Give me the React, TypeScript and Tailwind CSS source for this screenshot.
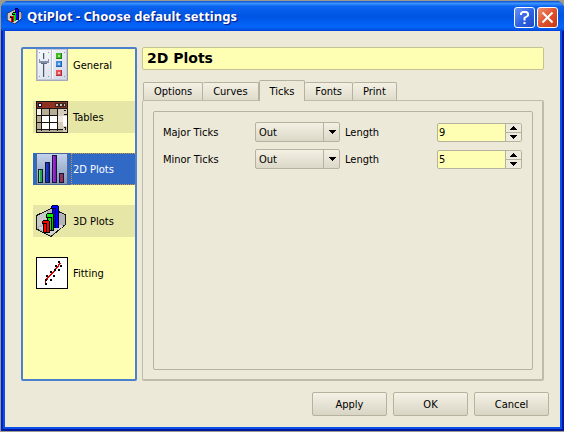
import { useState } from "react";
import type { ReactNode } from "react";

function GeneralIcon() {
  return (
    <svg width="32" height="32" viewBox="0 0 32 32" shapeRendering="crispEdges" aria-hidden="true">
      <defs>
        <linearGradient id="gen" x1="0" y1="0" x2="1" y2="1">
          <stop offset="0" stopColor="#f8fafc" />
          <stop offset="1" stopColor="#d2d8e6" />
        </linearGradient>
      </defs>
      <path fill="#8f94aa" d="M0 0h32v32H0z" />
      <path fill="#c3c8d8" d="M0 0h31v31H0z" />
      <path fill="#a5aabe" d="M0 0h1v31h31v1H0z" />
      <path fill="url(#gen)" d="M2 1h28v29H2z" />
      <path fill="#b9c0d2" d="M15 1h1v29h-1z" />
      <path fill="#fff" d="M16 1h1v29h-1z" />
      <path fill="#9097a8" d="M3 3h1v1H3zM12 3h1v1h-1zM3 27h1v1H3zM12 27h1v1h-1zM28 3h1v1h-1zM28 27h1v1h-1z" />
      <path fill="#4c566a" d="M7 4h1v24H7z" />
      <path fill="#c5ccd9" d="M8 4h1v24H8z" />
      <path fill="#8491a8" d="M3 10h10v4H3z" />
      <path fill="#e8edf5" d="M4 10h8v2H4z" />
      <path fill="#5c6c84" d="M5 14h6v1H5z" />
      <path fill="#247a16" d="M20 4h6v6h-6z" />
      <path fill="#42ba26" d="M20 4h5v5h-5z" />
      <path fill="#a0ee78" d="M22 6h2v2h-2z" />
      <path fill="#265faf" d="M20 12h6v6h-6z" />
      <path fill="#418be0" d="M20 12h5v5h-5z" />
      <path fill="#a9dcff" d="M22 14h2v2h-2z" />
      <path fill="#aa3040" d="M20 21h6v6h-6z" />
      <path fill="#e85058" d="M20 21h5v5h-5z" />
      <path fill="#ffc0b8" d="M22 23h2v2h-2z" />
    </svg>
  );
}

function TablesIcon() {
  return (
    <svg width="32" height="32" viewBox="0 0 32 32" shapeRendering="crispEdges" aria-hidden="true">
      <path fill="#181414" d="M0 0h32v32H0z" />
      <path fill="#d4ccbc" d="M1 1h30v30H1z" />
      <path fill="#912f20" d="M1 1h30v6H1z" />
      <path fill="#101030" d="M2 2h4v4H2z" />
      <path fill="#fff" d="M3 3h2v2H3z" />
      <path fill="#3b2520" d="M19 2h11v4H19z" />
      <path fill="#c9c0b0" d="M20 3h2v2h-2zM24 3h2v2h-2zM28 3h1v2h-1z" />
      <path fill="#1c1814" d="M0 7h32v1H0z" />
      <path fill="#b8ad96" d="M6 8h15v6H6zM1 15h5v6H1zM1 22h5v6H1z" />
      <path fill="#d4ccbc" d="M21 8h5v6h-5z" />
      <path fill="#f7f5ee" d="M1 8h4v6H1z" />
      <path fill="#fff" d="M6 15h15v13H6zM27 15h4v10h-4z" />
      <path fill="#ece8dc" d="M21 15h6v6h-6z" />
      <path fill="#171410" d="M5 8h1v22H5zM13 8h1v22h-1zM21 8h1v22h-1zM1 14h5v1H1zM6 14h16v1H6zM1 21h21v1H1zM1 28h26v1H1zM28 9h2v1h-2zM28 13h3v1h-3zM28 26h2v1h-2zM29 27h1v2h-1z" />
      <path fill="#b3aa98" d="M1 29h4v2H1zM6 29h7v2H6zM14 29h7v2h-7zM22 29h5v2h-5z" />
    </svg>
  );
}

function Plot2DIcon() {
  return (
    <svg width="32" height="32" viewBox="0 0 32 32" shapeRendering="crispEdges" aria-hidden="true">
      <defs>
        <linearGradient id="sky" x1="0" y1="0" x2="0" y2="1">
          <stop offset="0" stopColor="#c2d2ee" />
          <stop offset="1" stopColor="#8295b2" />
        </linearGradient>
        <linearGradient id="purple">
          <stop offset="0" stopColor="#b42ce4" />
          <stop offset="1" stopColor="#711aa0" />
        </linearGradient>
        <linearGradient id="blue">
          <stop offset="0" stopColor="#2040d8" />
          <stop offset="1" stopColor="#1020a0" />
        </linearGradient>
      </defs>
      <path fill="#4a6698" d="M0 0h32v32H0z" />
      <path fill="url(#sky)" d="M1 1h30v30H1z" />
      <path fill="#101838" d="M2 16h5v14H2zM9 9h5v21H9zM16 2h5v28h-5zM23 20h5v10h-5z" />
      <path fill="#24a854" d="M3 17h3v12H3z" />
      <path fill="#72dc82" d="M3 17h1v12H3z" />
      <path fill="url(#blue)" d="M10 10h3v19h-3z" />
      <path fill="url(#purple)" d="M17 3h3v26h-3z" />
      <path fill="#983058" d="M24 21h3v8h-3z" />
    </svg>
  );
}

function Plot3DIcon({ size = 32 }: { size?: number }) {
  return (
    <svg width={size} height={size} viewBox="0 0 32 32" shapeRendering="crispEdges" aria-hidden="true">
      <path fill="#b4b4b4" stroke="#181818" d="M.5 10.500L15 3.500l14.500 6v10L15 31.500.5 24z" />
      <path fill="#d4d4d4" d="M2 23l12-5 14 3-13 9z" />
      <path fill="#c8c8c8" d="M1 11l10-5v11l-10 5z" />
      <path fill="#000040" d="M15 1h1V0h6v1h1v22h-7V4h-1z" />
      <path fill="#0000ff" d="M16 1h6v2h-6zM17 4h2v18h-2zM20 3h2v20h-2z" />
      <path fill="#000" d="M10 9h1V8h6v1h1v17h-7V13h-1z" />
      <path fill="#00f000" d="M11 9h6v3h-6zM12 13h3v12h-3z" />
      <path fill="#00c000" d="M16 12h1v13h-1z" />
      <path fill="#000" d="M6 16h1v-1h6v1h1v12H7v-9H6z" />
      <path fill="#ff0000" d="M7 16h6v2H7zM8 19h2v8H8zM11 18h2v9h-2z" />
    </svg>
  );
}

function FittingIcon() {
  return (
    <svg width="32" height="32" viewBox="0 0 32 32" shapeRendering="crispEdges" aria-hidden="true">
      <path fill="#000" d="M0 0h32v32H0z" />
      <path fill="#fff" d="M1 1h30v30H1z" />
      <path fill="none" stroke="#e00000" strokeWidth="1.500" d="M9.500 27v-3l3-4 4-4 4-5 4-5" />
      <path
        fill="#000"
        d="M9 26h2v2H9zM9 22h2v2H9zM14 22h2v2h-2zM10 18h2v2h-2zM17 18h2v2h-2zM14 14h2v2h-2zM18 12h2v2h-2zM22 12h2v2h-2zM19 8h2v2h-2zM24 8h2v2h-2zM22 4h2v2h-2z"
      />
    </svg>
  );
}

const pages: { name: string; icon: ReactNode; striped: boolean }[] = [
  { name: "General", icon: <GeneralIcon />, striped: false },
  { name: "Tables", icon: <TablesIcon />, striped: true },
  { name: "2D Plots", icon: <Plot2DIcon />, striped: false },
  { name: "3D Plots", icon: <Plot3DIcon />, striped: true },
  { name: "Fitting", icon: <FittingIcon />, striped: false },
];

const tabs = ["Options", "Curves", "Ticks", "Fonts", "Print"];

function PageItem({
  page,
  selected,
  onSelect,
}: {
  page: (typeof pages)[number];
  selected: boolean;
  onSelect: () => void;
}) {
  const fill = selected ? "bg-[#316ac5] text-white" : page.striped ? "bg-[#e6e6a6]" : "";
  return (
    <li>
      <button type="button" onClick={onSelect} className={`flex h-8 w-full items-center pl-[3px] text-left ${fill}`}>
        {page.icon}
        <span
          className={`ml-[3px] flex h-8 flex-1 items-center border border-r-0 border-dotted pt-0.5 pl-px ${
            selected ? "border-[#ce953a]" : "border-transparent"
          }`}
        >
          {page.name}
        </span>
      </button>
    </li>
  );
}

function TickRow({ label, id, initial }: { label: string; id: string; initial: number }) {
  const [length, setLength] = useState(initial);
  return (
    <div className="flex h-5 items-center">
      <label htmlFor={`${id}-style`} className="w-[92px] pt-0.5">
        {label}
      </label>
      <div className="relative h-5 w-[85px]">
        <select
          id={`${id}-style`}
          defaultValue="Out"
          className="h-5 w-full appearance-none rounded-[2px] border border-[#b5b2a0] bg-linear-to-b from-[#f4f1e4] to-[#dbd8c8] pt-0.5 pl-[3px] outline-none"
        >
          <option>None</option>
          <option>Out</option>
          <option>In</option>
          <option>In &amp; Out</option>
        </select>
        <span className="pointer-events-none absolute inset-y-0 right-0 flex w-[17px] items-center justify-center border-l border-[#b5b2a0]">
          <svg width="7" height="4" shapeRendering="crispEdges" aria-hidden="true">
            <path d="M0 0h7v1H6v1H5v1H4v1H3V3H2V2H1V1H0z" />
          </svg>
        </span>
      </div>
      <label htmlFor={`${id}-length`} className="ml-[5px] w-[92px] pt-0.5">
        Length
      </label>
      <div className="flex h-[19px] w-[85px] rounded-[2px] border border-[#b5b2a0] bg-[#ffffb4]">
        <input
          id={`${id}-length`}
          type="text"
          inputMode="numeric"
          value={length}
          onChange={(e) => setLength(Number(e.target.value) || 0)}
          className="min-w-0 flex-1 pt-0.5 pl-px outline-none"
        />
        <div className="flex w-4 flex-col border-l border-[#b5b2a0] bg-[#eeebdc]">
          <button
            type="button"
            aria-label={`Increase ${label} length`}
            onClick={() => setLength(length + 1)}
            className="flex flex-1 items-center justify-center border-b border-[#b5b2a0]"
          >
            <svg width="7" height="4" shapeRendering="crispEdges" aria-hidden="true">
              <path d="M3 0h1v1h1v1h1v1h1v1H0V3h1V2h1V1h1z" />
            </svg>
          </button>
          <button
            type="button"
            aria-label={`Decrease ${label} length`}
            onClick={() => setLength(Math.max(0, length - 1))}
            className="flex flex-1 items-center justify-center"
          >
            <svg width="7" height="4" shapeRendering="crispEdges" aria-hidden="true">
              <path d="M0 0h7v1H6v1H5v1H4v1H3V3H2V2H1V1H0z" />
            </svg>
          </button>
        </div>
      </div>
    </div>
  );
}

export default function App() {
  const [page, setPage] = useState("2D Plots");
  const [tab, setTab] = useState("Ticks");

  return (
    <div className="flex h-screen flex-col bg-[#9d9a90] pt-px pb-px pl-px font-['DejaVu_Sans_Condensed','DejaVu_Sans',sans-serif] text-[11px] leading-4 text-black">
      <div className="flex flex-1 flex-col overflow-hidden rounded-t-lg bg-[#0831d9]">
        <header className="flex h-[30px] items-center bg-linear-[180deg,#0a4ed0_0%,#3c94ff_8%,#0a63ee_18%,#0054e3_50%,#0464fb_85%,#0458e6_94%,#003dd7_100%] px-[6px]">
          <Plot3DIcon size={16} />
          <h1 className="ml-1 flex-1 font-['Noto_Sans',sans-serif] text-[13px] font-bold text-white [text-shadow:1px_1px_1px_#0a1883]">
            QtiPlot - Choose default settings
          </h1>
          <div className="flex gap-[2px] pt-[2px]">
            <button
              type="button"
              aria-label="Help"
              className="flex size-[21px] items-center justify-center rounded-[3px] border border-white bg-linear-to-br from-[#6a94f4] via-[#3064e4] to-[#1c48c4]"
            >
              <svg width="13" height="15" viewBox="0 0 13 15" fill="none" stroke="#fff" strokeWidth="2" aria-hidden="true">
                <path d="M3 5V3.500L4.500 2h4L10 3.500v2L6.500 8v2.500M6.500 12v2" />
              </svg>
            </button>
            <button
              type="button"
              aria-label="Close"
              className="flex size-[21px] items-center justify-center rounded-[3px] border border-white bg-linear-to-br from-[#ee9070] via-[#e0522c] to-[#c33a14]"
            >
              <svg width="13" height="13" viewBox="0 0 13 13" stroke="#fff" strokeWidth="2" aria-hidden="true">
                <path d="M1.500 1.500l10 10M11.500 1.500l-10 10" />
              </svg>
            </button>
          </div>
        </header>

        <div className="flex flex-1 flex-col border-2 border-t-0 border-r-[#0018a0] border-b-[#0018a0] border-l-[#0024cc]">
          <div className="flex flex-1 flex-col border-2 border-t-0 border-[#0a50e8] bg-[#ece9d8] pt-4 pr-[11px] pb-[11px] pl-4">
            <main className="flex flex-1 gap-[5px] pr-[5px]">
              <nav aria-label="Settings pages" className="w-[116px] rounded-[2px] border-2 border-[#4a80cc] bg-[#ffffb4] pl-[10px]">
                <ul className="flex flex-col gap-5">
                  {pages.map((p) => (
                    <PageItem key={p.name} page={p} selected={p.name === page} onSelect={() => setPage(p.name)} />
                  ))}
                </ul>
              </nav>

              <section className="flex min-w-0 flex-1 flex-col">
                <h2 className="h-[23px] rounded-[2px] border border-[#c5c392] bg-[#ffffb4] pl-1 font-['DejaVu_Sans',sans-serif] text-[14px] leading-[21px] font-bold">
                  {page}
                </h2>
                <div role="tablist" className="mt-[10px] flex items-end pl-px">
                  {tabs.map((t) => (
                    <button
                      key={t}
                      type="button"
                      role="tab"
                      aria-selected={t === tab}
                      onClick={() => setTab(t)}
                      className={
                        t === tab
                          ? "z-10 -mb-px h-[21px] rounded-t-[2px] border border-b-0 border-[#b5b2a0] bg-[#ece9d8] px-[10px] pt-0.5"
                          : "h-[18px] rounded-t-[2px] border-t border-r border-[#b5b2a0] bg-linear-to-b from-[#f4f1e4] to-[#dfdccc] px-[10px] pt-px first:border-l"
                      }
                    >
                      {t}
                    </button>
                  ))}
                </div>
                <div
                  role="tabpanel"
                  aria-label={tab}
                  className="flex flex-1 rounded-[2px] border border-r-2 border-b-2 border-[#bfbcaa] pt-[10px] pr-[9px] pb-[9px] pl-[10px]"
                >
                  <div className="flex flex-1 flex-col gap-[7px] rounded-[2px] border border-[#b5b2a0] px-[9px] py-[10px]">
                    <TickRow label="Major Ticks" id="major" initial={9} />
                    <TickRow label="Minor Ticks" id="minor" initial={5} />
                  </div>
                </div>
              </section>
            </main>

            <footer className="mt-[11px] flex justify-end gap-[6px]">
              {["Apply", "OK", "Cancel"].map((name) => (
                <button
                  key={name}
                  type="button"
                  className="h-6 w-[75px] rounded-[2px] border border-[#b5b2a0] bg-linear-to-b from-[#f5f2e6] to-[#d8d5c5] pt-0.5"
                >
                  {name}
                </button>
              ))}
            </footer>
          </div>
        </div>
      </div>
    </div>
  );
}
